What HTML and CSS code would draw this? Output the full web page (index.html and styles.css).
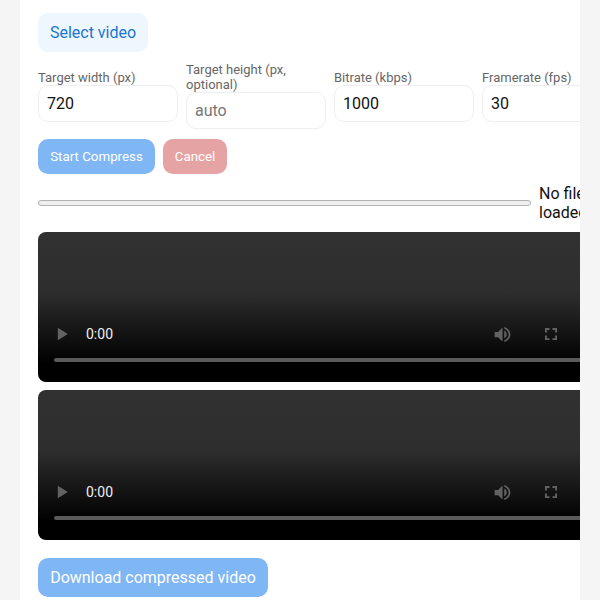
FILE: index.html
```html
<!DOCTYPE html>
<html lang="en">
<head>
  <meta charset="UTF-8" />
  <title>Video compress</title>
  <link rel="stylesheet" href="styles.css">
</head>
<body>
  <div class="card">
    <button class="btn btn-select">Select video</button>

    <div class="fields">
      <label class="field">
        <span>Target width (px)</span>
        <input type="text" value="720" />
      </label>
      <label class="field">
        <span>Target height (px, optional)</span>
        <input type="text" placeholder="auto" />
      </label>
      <label class="field">
        <span>Bitrate (kbps)</span>
        <input type="text" value="1000" />
      </label>
      <label class="field">
        <span>Framerate (fps)</span>
        <input type="text" value="30" />
      </label>
    </div>

    <div class="actions">
      <button class="btn btn-start">Start Compress</button>
      <button class="btn btn-cancel">Cancel</button>
    </div>

    <div class="progress-row">
      <div class="progress"></div>
      <div class="status">No file loaded</div>
    </div>

    <!-- Video players, drawn by hand -->
    <div class="player">
      <div class="controls">
        <svg class="icon icon-play" viewBox="0 0 24 24"><path d="M7 4.500v15l12-7.500z" /></svg>
        <span class="time">0:00</span>
        <svg class="icon icon-volume" viewBox="0 0 24 24"><path d="M3 9v6h4l5 5V4L7 9zM14 7.500v9c1.700-.8 2.800-2.500 2.800-4.500S15.700 8.300 14 7.500zM14 3.300v2.100c2.900.9 5 3.500 5 6.600s-2.100 5.700-5 6.600v2.100c4-.9 7-4.500 7-8.700s-3-7.800-7-8.700z" /></svg>
        <svg class="icon icon-full" viewBox="0 0 24 24"><path d="M4 4h6v2.500H6.500V10H4zM14 4h6v6h-2.500V6.500H14zM4 14h2.500v3.500H10V20H4zM17.500 14H20v6h-6v-2.500h3.500z" /></svg>
      </div>
      <div class="timeline"></div>
    </div>

    <div class="player">
      <div class="controls">
        <svg class="icon icon-play" viewBox="0 0 24 24"><path d="M7 4.500v15l12-7.500z" /></svg>
        <span class="time">0:00</span>
        <svg class="icon icon-volume" viewBox="0 0 24 24"><path d="M3 9v6h4l5 5V4L7 9zM14 7.500v9c1.700-.8 2.800-2.500 2.800-4.500S15.700 8.300 14 7.500zM14 3.300v2.100c2.900.9 5 3.500 5 6.600s-2.100 5.700-5 6.600v2.100c4-.9 7-4.500 7-8.700s-3-7.800-7-8.700z" /></svg>
        <svg class="icon icon-full" viewBox="0 0 24 24"><path d="M4 4h6v2.500H6.500V10H4zM14 4h6v6h-2.500V6.500H14zM4 14h2.500v3.500H10V20H4zM17.500 14H20v6h-6v-2.500h3.500z" /></svg>
      </div>
      <div class="timeline"></div>
    </div>

    <button class="btn btn-download">Download compressed video</button>
  </div>
</body>
</html>
```

FILE: styles.css
```css
* {
  margin: 0;
  padding: 0;
  box-sizing: border-box;
  font-family: 'Roboto', 'Liberation Sans', sans-serif;
}

html, body {
  height: 600px;
  overflow: hidden;
}

body {
  background-color: #f5f5f5;
  padding: 0 20px;
}

.card {
  background-color: #fff;
  height: 600px;
  padding: 13px 0 0 18px;
  overflow: hidden;
}

.btn {
  display: block;
  border: none;
  border-radius: 10px;
  font-size: 13.33px;
  color: #fff;
}

.btn-select {
  width: 110px;
  height: 39px;
  background-color: #eef6fe;
  color: #1976d2;
  font-size: 16px;
}

.fields {
  display: flex;
  align-items: center;
  gap: 8px;
  width: 584px;
  margin-top: 10px;
}

.field {
  display: flex;
  flex-direction: column;
  width: 140px;
  flex: none;
  font-size: 13px;
  line-height: 15px;
  color: #666;
}

.field input {
  width: 140px;
  height: 37px;
  padding: 0 8px;
  border: 1px solid #eee;
  border-radius: 10px;
  font-size: 16px;
  color: #111;
  outline: none;
}

.field input::placeholder {
  color: #777;
}

.actions {
  display: flex;
  gap: 8px;
  margin-top: 10px;
}

.btn-start {
  width: 117px;
  height: 35px;
  background-color: #7fb6f4;
}

.btn-cancel {
  width: 64px;
  height: 35px;
  background-color: #e6a3a3;
}

.progress-row {
  display: flex;
  align-items: center;
  gap: 8px;
  width: 600px;
  margin-top: 10px;
}

.progress {
  width: 493px;
  height: 6px;
  flex: none;
  background-color: #efefef;
  border: 1px solid #b2b2b2;
  border-radius: 3px;
}

.status {
  width: 60px;
  font-size: 16px;
  line-height: 19px;
  color: #111;
}

.player {
  position: relative;
  width: 560px;
  height: 150px;
  margin-bottom: 8px;
  border-radius: 8px;
  background: linear-gradient(#313131 0, #2e2e2e 40%, #000 88%);
}

.progress-row + .player {
  margin-top: 10px;
}

.controls {
  position: absolute;
  left: 14px;
  right: 38px;
  top: 92px;
  height: 20px;
  display: flex;
  align-items: center;
}

.icon {
  flex: none;
  fill: #626262;
}

.icon-play {
  width: 20px;
  height: 20px;
}

.time {
  margin-left: 14px;
  font-size: 14px;
  color: #eee;
}

.icon-volume {
  width: 21px;
  height: 21px;
  margin-left: auto;
}

.icon-full {
  width: 18px;
  height: 18px;
  margin-left: 29px;
}

.timeline {
  position: absolute;
  left: 16px;
  right: 0;
  top: 126px;
  height: 4px;
  background-color: #5a5a5a;
  border-radius: 2px;
}

.btn-download {
  width: 230px;
  height: 39px;
  margin-top: 18px;
  background-color: #7fb6f4;
  font-size: 16px;
}
```
